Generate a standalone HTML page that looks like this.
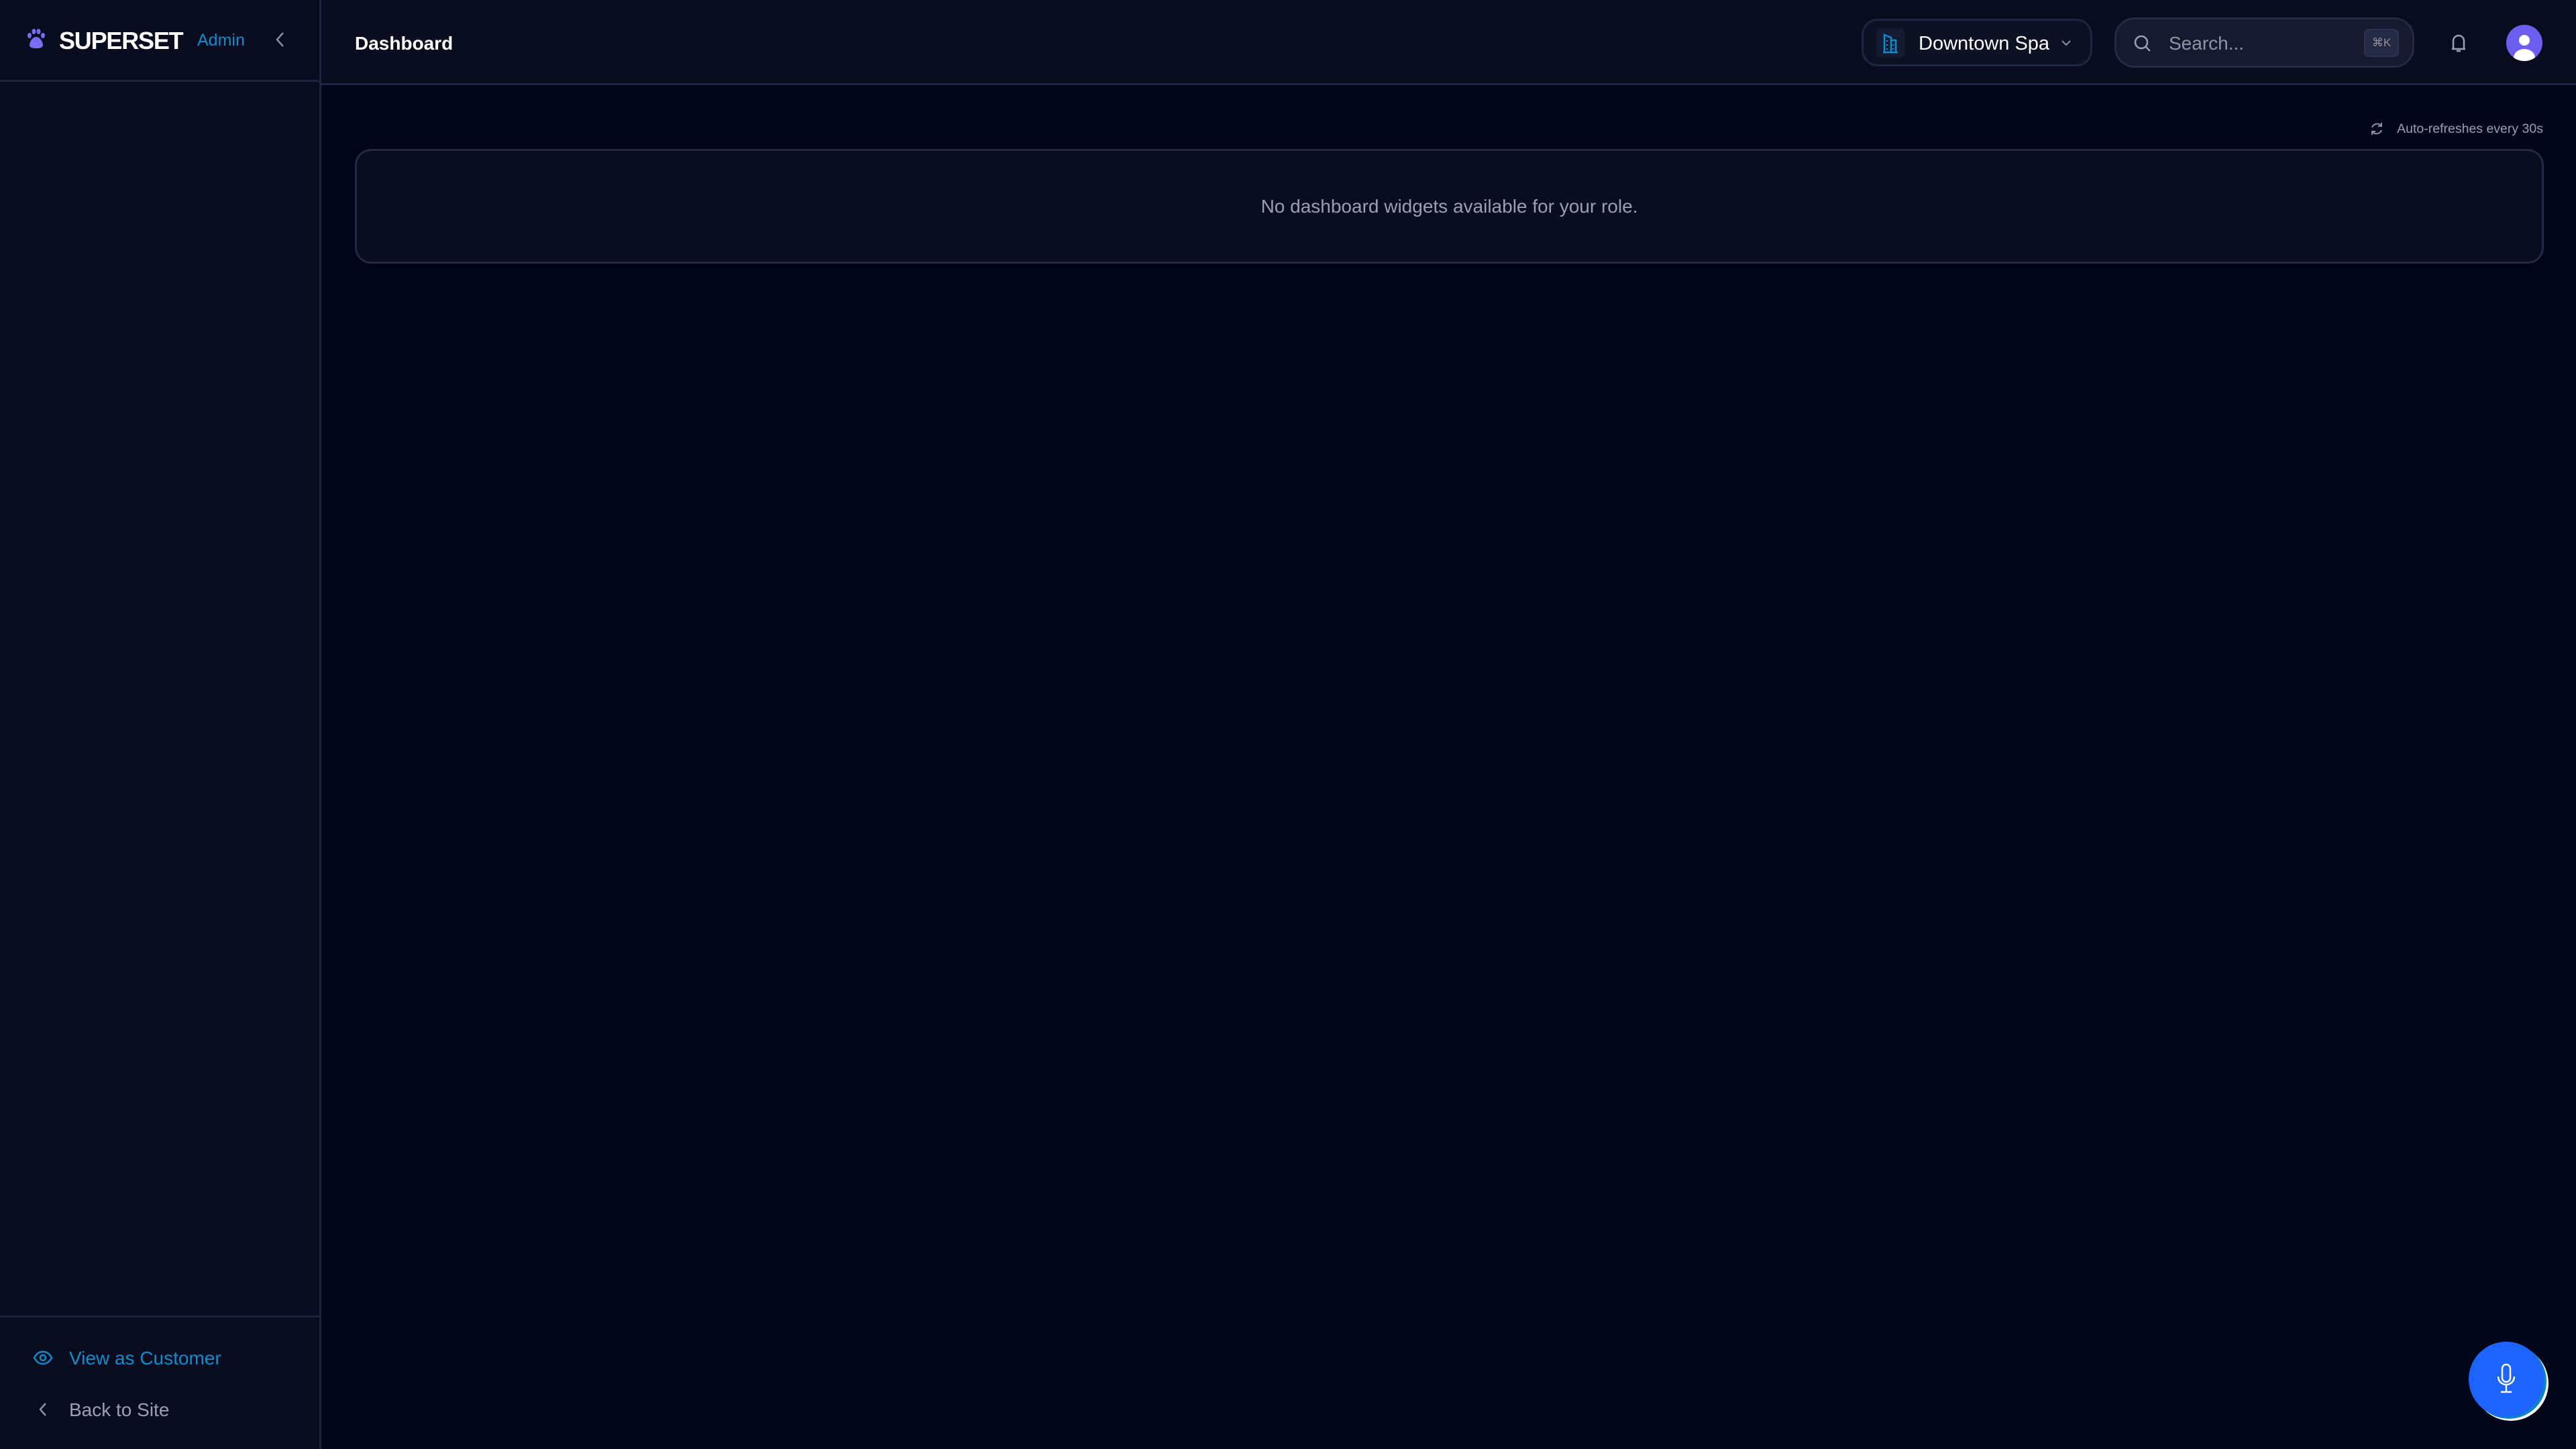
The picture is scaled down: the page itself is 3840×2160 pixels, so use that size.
<!DOCTYPE html>
<html><head><meta charset="utf-8"><style>
*{box-sizing:border-box;margin:0;padding:0}
html,body{width:3840px;height:2160px;overflow:hidden;background:#020417;font-family:"Liberation Sans",sans-serif}
.side{position:absolute;left:0;top:0;width:479px;height:2160px;background:#090c1f;border-right:3px solid #1e2440}
.side .hd{position:absolute;left:0;top:0;width:476px;height:122px;border-bottom:3px solid #1e2440}
.main-hd{position:absolute;left:479px;top:0;width:3361px;height:127px;background:#090c1f;border-bottom:3px solid #1e2440}
.abs{position:absolute}
</style></head><body>
<div class="side">
 <div class="hd">
  <svg class="abs" style="left:38px;top:42px" width="32" height="32" viewBox="0 0 32 32"><ellipse cx="6" cy="11" rx="3" ry="4" fill="#7b6cf0"/><ellipse cx="12.5" cy="5" rx="3" ry="4" fill="#7b6cf0"/><ellipse cx="19.5" cy="5" rx="3" ry="4" fill="#7b6cf0"/><ellipse cx="26" cy="11" rx="3" ry="4" fill="#7b6cf0"/><path d="M16 13c-6 0-10 8-10 12 0 4 4 5 10 5s10-1 10-5c0-4-4-12-10-12z" fill="#7b6cf0"/></svg>
  <div class="abs" style="left:88px;top:40px;font-size:36px;font-weight:bold;color:#fff;letter-spacing:-1.2px">SUPERSET</div>
  <div class="abs" style="left:294px;top:46px;font-size:25px;color:#0f8ccd">Admin</div>
  <svg class="abs" style="left:408px;top:46px" width="20" height="26" viewBox="0 0 20 26"><path d="M14 3L5 13l9 10" stroke="#8a90a5" stroke-width="2.5" fill="none"/></svg>
 </div>
 <div class="abs" style="left:0;top:1961px;width:476px;height:3px;background:#1e2440"></div>
 <svg class="abs" style="left:49px;top:2013px" width="30" height="22" viewBox="0 0 30 22"><path d="M2 11C6 4 10 2 15 2s9 2 13 9c-4 7-8 9-13 9S6 18 2 11z" stroke="#0f8ccd" stroke-width="2.5" fill="none"/><circle cx="15" cy="11" r="4" stroke="#0f8ccd" stroke-width="2.5" fill="none"/></svg>
 <div class="abs" style="left:103px;top:2009px;font-size:28px;color:#0f8ccd">View as Customer</div>
 <svg class="abs" style="left:56px;top:2089px" width="16" height="24" viewBox="0 0 16 24"><path d="M12 3L4 12l8 9" stroke="#8a90a5" stroke-width="2.5" fill="none"/></svg>
 <div class="abs" style="left:103px;top:2086px;font-size:28px;color:#9a9fb2">Back to Site</div>
</div>
<div class="main-hd">
 <div class="abs" style="left:50px;top:49px;font-size:28px;font-weight:bold;color:#fff">Dashboard</div>
 <div class="abs" style="left:2296px;top:28px;width:344px;height:71px;border:3px solid #1f2640;border-radius:24px;background:#0d1124"></div>
 <div class="abs" style="left:2318px;top:42px;width:42px;height:44px;border-radius:8px;background:#151b33"></div>
 <svg class="abs" style="left:2326px;top:48px" width="26" height="32" viewBox="0 0 26 32"><path d="M4 30V4l10 4v22M14 12h7v18M2 30h22M8 12v2M8 18v2M8 24v2M17 18v2M17 24v2" stroke="#0f8ccd" stroke-width="2.5" fill="none"/></svg>
 <div class="abs" style="left:2381px;top:49px;font-size:29px;color:#fff">Downtown Spa</div>
 <svg class="abs" style="left:2593px;top:58px" width="16" height="12" viewBox="0 0 16 12"><path d="M2 3l6 6 6-6" stroke="#8a90a5" stroke-width="2" fill="none"/></svg>
 <div class="abs" style="left:2673px;top:26px;width:447px;height:75px;border:3px solid #222a45;border-radius:30px;background:#151a2e"></div>
 <svg class="abs" style="left:2700px;top:50px" width="30" height="30" viewBox="0 0 30 30"><circle cx="13" cy="13" r="9" stroke="#9aa0b4" stroke-width="2.5" fill="none"/><path d="M20 20l6 6" stroke="#9aa0b4" stroke-width="2.5"/></svg>
 <div class="abs" style="left:2754px;top:49px;font-size:28px;color:#8e93a7">Search...</div>
 <div class="abs" style="left:3045px;top:43px;width:52px;height:42px;border-radius:8px;background:#232a42;border:2px solid #2c3350;color:#8e93a7;font-size:17px;line-height:38px;text-align:center">⌘K</div>
 <svg class="abs" style="left:3171px;top:48px" width="30" height="32" viewBox="0 0 30 32"><path d="M7 25V13a8 8 0 0 1 16 0v12zM5 25h20" stroke="#9aa0b4" stroke-width="2.5" fill="none" stroke-linejoin="round"/><path d="M12 28h6" stroke="#9aa0b4" stroke-width="2.5"/></svg>
 <svg class="abs" style="left:3256px;top:36px" width="56" height="56" viewBox="0 0 56 56"><defs><clipPath id="c"><circle cx="28" cy="28" r="27"/></clipPath></defs><circle cx="28" cy="28" r="27" fill="#6c5ff0"/><g clip-path="url(#c)" fill="#fff"><circle cx="28" cy="24" r="8"/><ellipse cx="28" cy="50" rx="16" ry="13"/></g></svg>
</div>
<svg class="abs" style="left:3532px;top:180px" width="22" height="24" viewBox="0 0 22 24"><path d="M18 8a8 8 0 0 0-14 2M4 16a8 8 0 0 0 14-2M18 3v5h-5M4 21v-5h5" stroke="#8a90a5" stroke-width="2" fill="none"/></svg>
<div class="abs" style="left:3500px;top:181px;width:291px;text-align:right;font-size:19.5px;color:#9a9fb2">Auto-refreshes every 30s</div>
<div class="abs" style="left:529px;top:222px;width:3263px;height:171px;border:3px solid #232a42;border-radius:24px;background:#0a0d1f"></div>
<div class="abs" style="left:529px;top:292px;width:3263px;text-align:center;font-size:28px;color:#9a9fb2">No dashboard widgets available for your role.</div>
<div class="abs" style="left:3684px;top:2003px;width:112px;height:112px;border-radius:50%;background:#0d84c8;box-shadow:3px 3px 0 #fff"></div>
<div class="abs" style="left:3680px;top:2000px;width:112px;height:112px;border-radius:50%;background:#1e63fb"></div>
<svg class="abs" style="left:3720px;top:2032px" width="32" height="48" viewBox="0 0 32 48"><rect x="10" y="2" width="12" height="26" rx="6" stroke="#fff" stroke-width="2.5" fill="none"/><path d="M4 20a12 12 0 0 0 24 0M16 32v10M8 43h16" stroke="#fff" stroke-width="2.5" fill="none"/></svg>
</body></html>
